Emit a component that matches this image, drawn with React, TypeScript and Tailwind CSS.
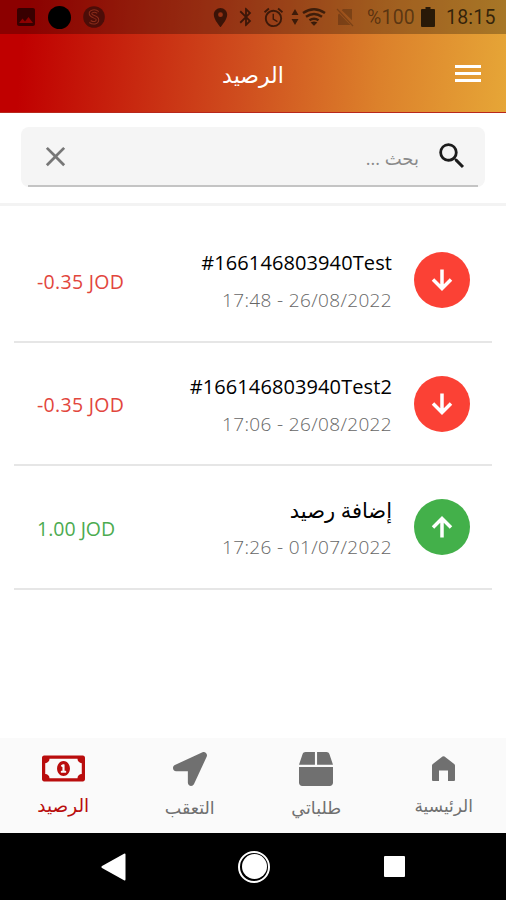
import React from 'react';
import { FaBox, FaLocationArrow, FaRegMoneyBillAlt } from 'react-icons/fa';
import {
  MdAlarm,
  MdBluetooth,
  MdClose,
  MdImage,
  MdLocationOn,
  MdSearch,
} from 'react-icons/md';

interface Transaction {
  id: number;
  title: string;
  titleClass: string;
  date: string;
  amount: string;
  incoming: boolean;
}

const transactions: Transaction[] = [
  { id: 1, title: '#166146803940Test', titleClass: 'text-[20px] tracking-[0.1px]', date: '17:48 - 26/08/2022', amount: '-0.35 JOD', incoming: false },
  { id: 2, title: '#166146803940Test2', titleClass: 'text-[20px] tracking-[0.1px]', date: '17:06 - 26/08/2022', amount: '-0.35 JOD', incoming: false },
  { id: 3, title: 'إضافة رصيد', titleClass: 'text-[21px]', date: '17:26 - 01/07/2022', amount: '1.00 JOD', incoming: true },
];

const StatusBar: React.FC = () => (
  <div className="flex h-[34px] items-center bg-black/27 font-[Roboto,sans-serif] text-black/60">
    <MdImage size={24} className="ml-[14px]" />
    <div className="ml-[10px] h-[23px] w-[23px] rounded-full bg-black" />
    <svg viewBox="0 0 22 22" className="ml-[12px] h-[22px] w-[22px]">
      <circle cx="11" cy="11" r="10.8" fill="#4c0d08" />
      <path d="M15 6.5C12 4 7 5 7.5 8s7 2.5 7 5.8-4.5 4-7.5 1.7" fill="none" stroke="#8a2c1a" strokeWidth="3.5" />
      <path d="M15 6.5C12 4 7 5 7.5 8s7 2.5 7 5.8-4.5 4-7.5 1.7" fill="none" stroke="#4c0d08" strokeWidth="1.5" />
    </svg>
    <MdLocationOn size={23} className="ml-[104px]" />
    <MdBluetooth size={22} className="ml-[3px]" />
    <MdAlarm size={23} className="ml-[5px]" />
    <svg viewBox="0 0 8 18" className="ml-[6px] h-[18px] w-[8px]" fill="currentColor">
      <path d="M4 1l3.5 6h-7zM4 17l3.5-6h-7z" />
    </svg>
    <svg viewBox="0 0 24 20" className="ml-[3px] h-[20px] w-[24px]" fill="none" stroke="currentColor" strokeWidth="2.500">
      <path d="M1 6Q12-1.5 23 6M4 9.7q8-5.5 16 0M7.5 13.2q4.500-3 9 0" />
      <path d="M9 15.500q3-1.500 6 0L12 18.500z" fill="currentColor" strokeWidth="0.500" />
    </svg>
    <svg viewBox="0 0 20 20" className="ml-[9px] h-[20px] w-[20px] opacity-35">
      <path d="M8 2h9v11.200L6.800 3.200zM4.200 6.500L15.400 18H3V7.700z" fill="currentColor" />
      <path d="M2 2l16 17" stroke="currentColor" strokeWidth="1.200" />
    </svg>
    <span dir="ltr" className="ml-[12px] w-[48px] whitespace-nowrap pt-[2px] text-[19.500px] leading-none tracking-[0.2px] text-black/45">%100</span>
    <svg viewBox="0 0 14 20" className="ml-[6px] h-[20px] w-[14px] text-black/75" fill="currentColor">
      <path d="M4.500 0h5v2H13q1 0 1 1v16q0 1-1 1H1q-1 0-1-1V3q0-1 1-1h3.500z" />
    </svg>
    <span className="ml-[11px] whitespace-nowrap pt-[2px] text-[19.500px] leading-none tracking-[0.200px] text-black/70">18:15</span>
  </div>
);

const AppBar: React.FC = () => (
  <div className="grid h-[79px] grid-cols-3 items-center">
    <span />
    <h1 className="text-center text-[22px] leading-none font-normal text-white">الرصيد</h1>
    <div className="mr-[25px] flex flex-col gap-[4px] justify-self-end">
      <span className="h-[3px] w-[26px] bg-white" />
      <span className="h-[3px] w-[26px] bg-white" />
      <span className="h-[3px] w-[26px] bg-white" />
    </div>
  </div>
);

const SearchBar: React.FC = () => (
  <div className="h-[93px] border-b-[3px] border-[#f3f3f3] px-[21px] pt-[14px]">
    <div className="h-[60px] rounded-[8px] bg-[#f5f5f5] px-[7px]">
      <div className="flex h-[60px] items-center border-b-2 border-[#c4c4c4]">
        <MdClose size={33} className="ml-[11px] text-[#777]" />
        <span dir="rtl" className="mr-[16px] ml-auto pt-[3px] text-[18px] leading-none tracking-[-0.3px] text-[#8a8a8a]">بحث ...</span>
        <MdSearch size={34} className="mr-[9px] text-[#1c1c1c]" />
      </div>
    </div>
  </div>
);

const ArrowIcon: React.FC<{ up: boolean }> = ({ up }) => (
  <svg
    viewBox="0 0 24 24"
    className={`h-[24px] w-[24px] ${up ? 'rotate-180' : ''}`}
    fill="none"
    stroke="currentColor"
    strokeWidth="3.500"
  >
    <path d="M12 1.500v18M3 11.500l9 9 9-9" />
  </svg>
);

const TransactionRow: React.FC<{ item: Transaction }> = ({ item }) => (
  <li className="mx-[14px] flex h-[123.700px] items-center border-b-2 border-[#e6e6e6]">
    <span className={`ml-[23px] pt-[3px] whitespace-nowrap text-[19.500px] leading-none font-normal ${item.incoming ? 'text-[#4cab50]' : 'text-[#e2463d] tracking-[0.300px]'}`}>
      {item.amount}
    </span>
    <div className="mr-[22px] ml-auto flex flex-col items-end pt-[4px] whitespace-nowrap">
      <span dir="auto" className={`flex h-[37px] items-center leading-none font-medium text-black ${item.titleClass}`}>{item.title}</span>
      <span className="flex h-[37px] items-center text-[19px] leading-none font-light tracking-[0.350px] text-[#666]">{item.date}</span>
    </div>
    <div className={`mr-[22px] flex h-[56px] w-[56px] items-center justify-center rounded-full text-white ${item.incoming ? 'bg-[#43b04a]' : 'bg-[#fb4135]'}`}>
      <ArrowIcon up={item.incoming} />
    </div>
  </li>
);

const HomeIcon: React.FC = () => (
  <svg viewBox="0 0 23 25" className="h-[25px] w-[23px]" fill="currentColor">
    <path d="M0 9.500Q0 8.500.8 8L10.500.6q1-.7 2 0L22.200 8q.8.500.8 1.500V24q0 1-1 1h-6V14.500H7V25H1q-1 0-1-1z" />
  </svg>
);

const BottomTabs: React.FC = () => (
  <nav className="grid h-[95px] grid-cols-4 bg-[#fafafa] text-[#707070]">
    <div className="flex flex-col items-center text-[#b90d0d]">
      <div className="flex h-[61px] items-center"><FaRegMoneyBillAlt size={43} /></div>
      <span className="text-[18.500px] leading-[12px]">الرصيد</span>
    </div>
    <div className="flex flex-col items-center">
      <div className="flex h-[61px] items-center"><FaLocationArrow size={34} /></div>
      <span className="text-[17.500px] leading-[16px]">التعقب</span>
    </div>
    <div className="flex flex-col items-center">
      <div className="flex h-[61px] items-center"><FaBox size={34} /></div>
      <span className="text-[17.500px] leading-[16px]">طلباتي</span>
    </div>
    <div className="flex flex-col items-center pl-[2px]">
      <div className="flex h-[61px] items-center"><HomeIcon /></div>
      <span className="text-[17px] leading-[14px]">الرئيسية</span>
    </div>
  </nav>
);

const SystemNav: React.FC = () => (
  <div className="flex h-[67px] items-center bg-black text-white">
    <svg viewBox="0 0 25 28" className="ml-[101px] h-[28px] w-[25px]" fill="currentColor">
      <path d="M1 13L23 .7q1.500-.7 1.500 1v24.600q0 1.700-1.500 1L1 15q-1.200-1 0-2z" />
    </svg>
    <div className="ml-[112px] flex h-[32px] w-[32px] items-center justify-center rounded-full border-2 border-white">
      <div className="h-[25px] w-[25px] rounded-full bg-white" />
    </div>
    <div className="ml-[114px] h-[21px] w-[21px] rounded-[1px] bg-white" />
  </div>
);

const App: React.FC = () => (
  <div className="flex h-[900px] w-[506px] flex-col overflow-hidden bg-white font-['Open_Sans','Noto_Sans','DejaVu_Sans',sans-serif]">
    <header className="h-[113px] border-b border-[#b8271c] bg-[linear-gradient(95deg,#c00000_5%,#cf4d1e_48%,#dc812b_75%,#e6a637_100%)]">
      <StatusBar />
      <AppBar />
    </header>
    <SearchBar />
    <ul className="grow pt-[13px]">
      {transactions.map((item) => (
        <TransactionRow key={item.id} item={item} />
      ))}
    </ul>
    <BottomTabs />
    <SystemNav />
  </div>
);

export default App;
